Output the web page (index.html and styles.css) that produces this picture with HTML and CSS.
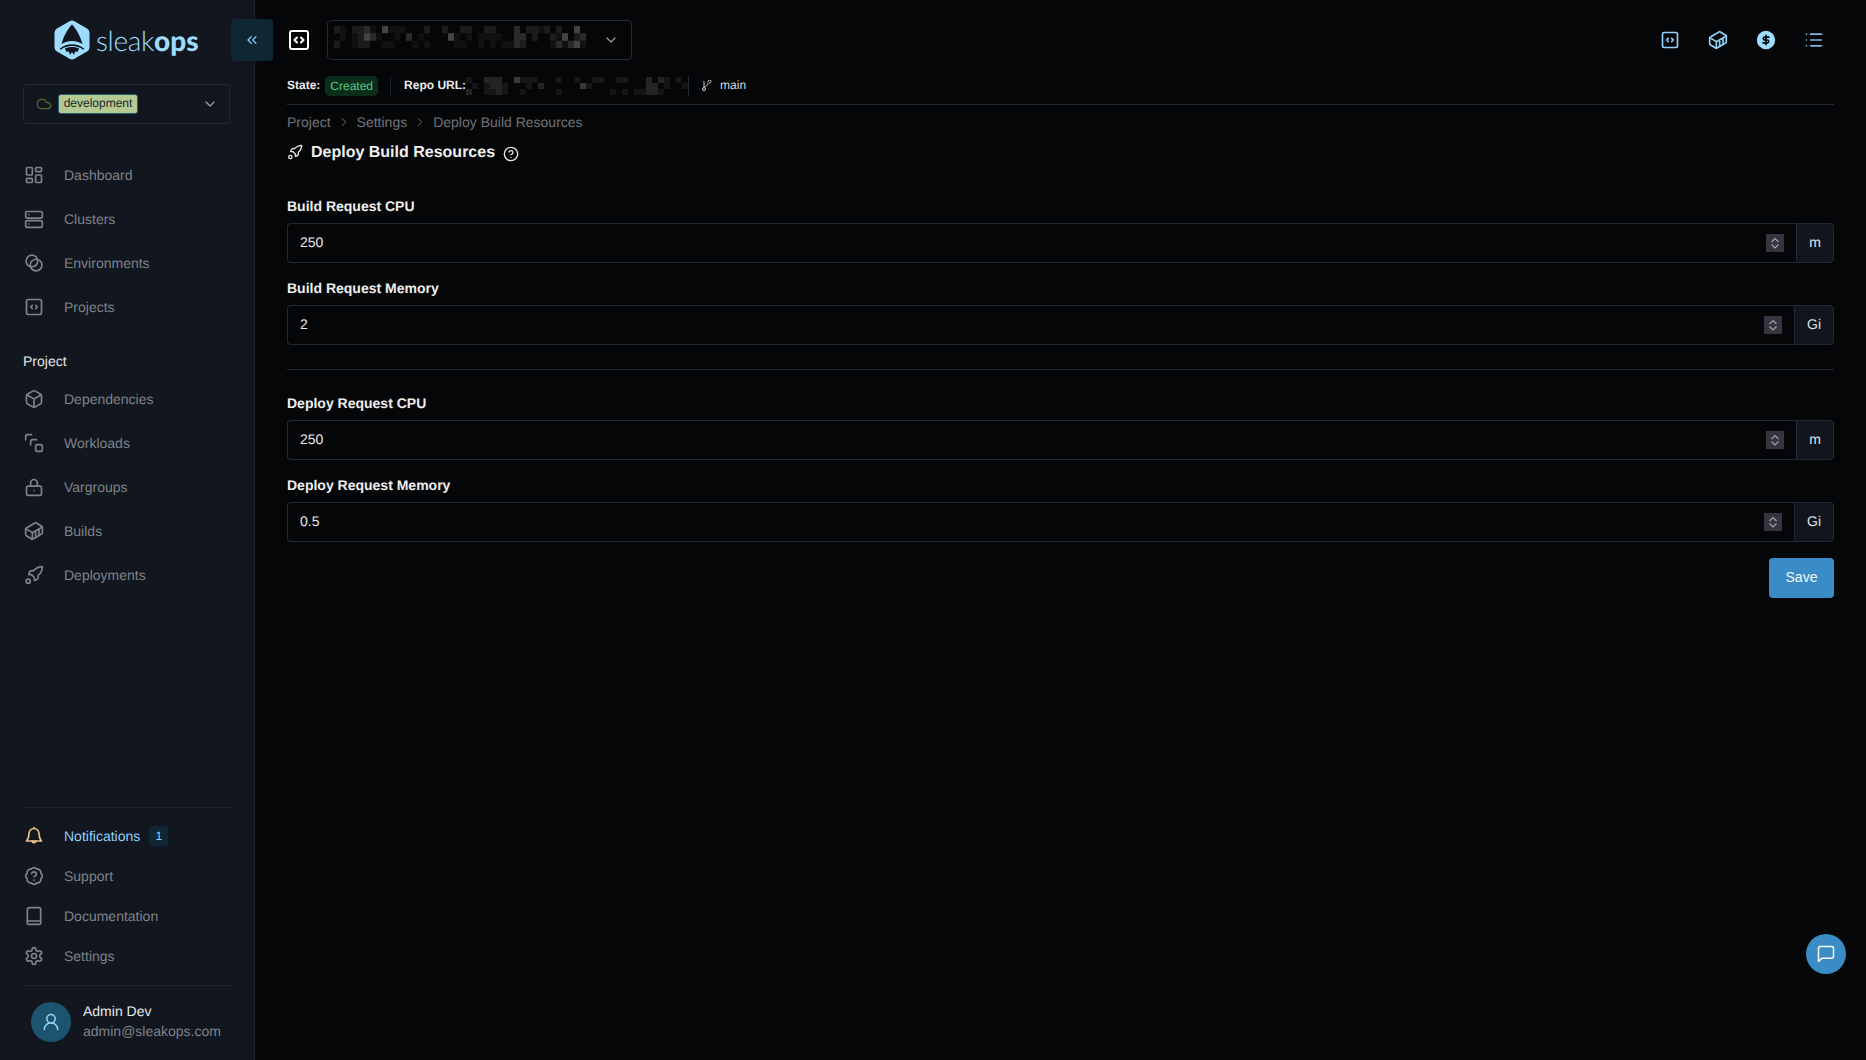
FILE: index.html
```html
<!DOCTYPE html>
<html lang="en">
<head>
<meta charset="utf-8">
<title>Deploy Build Resources</title>
<link rel="stylesheet" href="styles.css">
</head>
<body>
<div class="app">
  <aside class="sidebar">
    <div class="logo">
      <svg class="logo-mark" viewBox="0 0 36 40">
        <path class="logo-hex" d="M15.500 1.200a5 5 0 0 1 5 0l12.500 7.200a5 5 0 0 1 2.500 4.300v14.600a5 5 0 0 1-2.500 4.300l-12.500 7.200a5 5 0 0 1-5 0L3 31.600a5 5 0 0 1-2.500-4.300V12.700A5 5 0 0 1 3 8.400z"/>
        <path class="logo-cut" d="M18 4.500c4.500 4.500 8.500 12 10.500 19.500-6.500-4-14.500-4-21 0C9.500 16.500 13.500 9 18 4.500z"/>
        <path class="logo-cut" d="M5.800 28.500c7-5.800 17.400-5.800 24.400 0l-.9 1.200c-6.600-5-16-5-22.600 0z"/>
        <path class="logo-cut" d="M11 28.500c4-2 10-2 14 0l-1.500 3.500-2-.8-1.500 3.500-2-2.500-2 2.500-1.500-3.500-2 .8z"/>
      </svg>
      <span class="logo-text">sleak<b>ops</b></span>
    </div>
    <div class="env-select">
      <svg class="env-cloud" viewBox="0 0 24 24"><path d="M17.500 19H9a7 7 0 1 1 6.710-9h1.790a4.500 4.500 0 1 1 0 9z"/></svg>
      <span class="env-tag">development</span>
      <svg class="chev" viewBox="0 0 24 24"><path d="m6 9 6 6 6-6"/></svg>
    </div>
    <nav class="nav nav-main">
      <a class="nav-row"><svg class="ico" viewBox="0 0 24 24"><rect x="3" y="3" width="7" height="9" rx="1"/><rect x="14" y="3" width="7" height="5" rx="1"/><rect x="14" y="12" width="7" height="9" rx="1"/><rect x="3" y="16" width="7" height="5" rx="1"/></svg>Dashboard</a>
      <a class="nav-row"><svg class="ico" viewBox="0 0 24 24"><rect x="2" y="3" width="20" height="8" rx="2"/><rect x="2" y="14" width="20" height="8" rx="2"/><path d="M6 7h.01M6 18h.01"/></svg>Clusters</a>
      <a class="nav-row"><svg class="ico" viewBox="0 0 24 24"><circle cx="9.500" cy="9.500" r="7"/><circle cx="14.500" cy="14.500" r="7"/></svg>Environments</a>
      <a class="nav-row"><svg class="ico" viewBox="0 0 24 24"><rect x="3" y="3" width="18" height="18" rx="2"/><path d="m10 10-2 2 2 2M14 14l2-2-2-2"/></svg>Projects</a>
    </nav>
    <div class="nav-heading">Project</div>
    <nav class="nav">
      <a class="nav-row"><svg class="ico" viewBox="0 0 24 24"><path d="M21 8a2 2 0 0 0-1-1.730l-7-4a2 2 0 0 0-2 0l-7 4A2 2 0 0 0 3 8v8a2 2 0 0 0 1 1.730l7 4a2 2 0 0 0 2 0l7-4A2 2 0 0 0 21 16Z"/><path d="m3.300 7 8.700 5 8.700-5M12 22V12"/></svg>Dependencies</a>
      <a class="nav-row"><svg class="ico" viewBox="0 0 24 24"><path d="M2 8V4.500A2.500 2.500 0 0 1 4.500 2H9"/><path d="M8 14v-3.500A2.500 2.500 0 0 1 10.500 8H15"/><rect x="14" y="14" width="8" height="8" rx="2"/></svg>Workloads</a>
      <a class="nav-row"><svg class="ico" viewBox="0 0 24 24"><rect x="3" y="11" width="18" height="11" rx="2"/><path d="M8 11V7a4 4 0 0 1 8 0v4M12 16.500h.01"/></svg>Vargroups</a>
      <a class="nav-row"><svg class="ico" viewBox="0 0 24 24"><path d="M22 7.700c0-.6-.4-1.200-.8-1.500l-6.300-3.900a1.720 1.720 0 0 0-1.700 0l-10.300 6c-.5.2-.9.8-.9 1.400v6.600c0 .5.4 1.200.8 1.500l6.300 3.900a1.720 1.720 0 0 0 1.700 0l10.300-6c.5-.3.9-1 .9-1.500Z"/><path d="M10 21.900V14L2.100 9.100M10 14l11.900-6.900M14 19.800v-8.100M18 17.500V9.400"/></svg>Builds</a>
      <a class="nav-row"><svg class="ico" viewBox="0 0 24 24"><path d="M9 11.500H5.500s.6-3 2-4c1.600-1.100 4-.5 4-.5 2.500-3 6-5 10.500-5 0 4.500-2 8-5 10.500 0 0 .6 2.400-.5 4-1 1.400-4 2-4 2V15z"/><circle cx="5" cy="19.500" r="2.500"/></svg>Deployments</a>
    </nav>
    <div class="side-foot">
      <nav class="nav nav-foot">
        <a class="nav-row nav-row-tight nav-active"><svg class="ico ico-bell" viewBox="0 0 24 24"><path d="M6 9a6 6 0 0 1 12 0c0 6 2.500 8 3 9H3c.5-1 3-3 3-9"/><path d="M12 3V2M10 18a2 2 0 0 0 4 0"/></svg>Notifications<span class="count">1</span></a>
        <a class="nav-row nav-row-tight"><svg class="ico" viewBox="0 0 24 24"><path d="M3.850 8.620a4 4 0 0 1 4.780-4.770 4 4 0 0 1 6.740 0 4 4 0 0 1 4.780 4.780 4 4 0 0 1 0 6.740 4 4 0 0 1-4.770 4.780 4 4 0 0 1-6.750 0 4 4 0 0 1-4.780-4.770 4 4 0 0 1 0-6.760Z"/><path d="M9.090 9a3 3 0 0 1 5.830 1c0 2-3 3-3 3M12 17h.01"/></svg>Support</a>
        <a class="nav-row nav-row-tight"><svg class="ico" viewBox="0 0 24 24"><path d="M4 5a3 3 0 0 1 3-3h11a2 2 0 0 1 2 2v16a2 2 0 0 1-2 2H6a2 2 0 0 1-2-2z"/><path d="M4 18h16"/></svg>Documentation</a>
        <a class="nav-row nav-row-tight"><svg class="ico" viewBox="0 0 24 24"><path d="M12.220 2h-.44a2 2 0 0 0-2 2v.18a2 2 0 0 1-1 1.730l-.43.25a2 2 0 0 1-2 0l-.15-.08a2 2 0 0 0-2.730.73l-.22.38a2 2 0 0 0 .73 2.730l.15.1a2 2 0 0 1 1 1.720v.51a2 2 0 0 1-1 1.740l-.15.09a2 2 0 0 0-.73 2.730l.22.38a2 2 0 0 0 2.730.73l.15-.08a2 2 0 0 1 2 0l.43.25a2 2 0 0 1 1 1.730V20a2 2 0 0 0 2 2h.44a2 2 0 0 0 2-2v-.18a2 2 0 0 1 1-1.730l.43-.25a2 2 0 0 1 2 0l.15.08a2 2 0 0 0 2.730-.73l.22-.39a2 2 0 0 0-.73-2.730l-.15-.08a2 2 0 0 1-1-1.740v-.5a2 2 0 0 1 1-1.740l.15-.09a2 2 0 0 0 .73-2.730l-.22-.38a2 2 0 0 0-2.730-.73l-.15.08a2 2 0 0 1-2 0l-.43-.25a2 2 0 0 1-1-1.730V4a2 2 0 0 0-2-2z"/><circle cx="12" cy="12" r="3"/></svg>Settings</a>
      </nav>
      <div class="user">
        <span class="avatar"><svg viewBox="0 0 24 24"><circle cx="12" cy="8" r="5"/><path d="M20 21a8 8 0 0 0-16 0"/></svg></span>
        <span class="user-text"><span class="user-name">Admin Dev</span><span class="user-mail">admin@sleakops.com</span></span>
      </div>
    </div>
  </aside>

  <main class="main">
    <header class="topbar">
      <button class="collapse"><svg viewBox="0 0 24 24"><path d="m11 17-5-5 5-5M18 17l-5-5 5-5"/></svg></button>
      <svg class="top-code" viewBox="0 0 20 20"><rect x="1" y="1" width="18" height="18" rx="2"/><path d="M8 7.500 5.500 10 8 12.500M12 12.500l2.500-2.500L12 7.500"/></svg>
      <div class="project-select">
        <svg class="mosaic mosaic-a" viewBox="0 0 42 3" preserveAspectRatio="none">
          <path class="m1" d="M1 0h1v1H1zM9 0h3v1H9zM34 0h1v1h-1zM6 0h1v1H6zM1 1h1v1H1zM3 1h1v1H3zM7 1h1v1H7zM10 1h1v1h-1zM14 1h1v1h-1zM20 1h1v1h-1zM22 1h1v1h-1zM24 1h4v1h-4zM37 1h1v1h-1zM3 2h1v1H3zM8 2h2v1H8zM13 2h1v1h-1zM15 2h1v1h-1zM20 2h2v1h-2zM24 2h1v1h-1zM26 2h1v1h-1zM28 2h2v1h-2zM36 2h1v1h-1zM38 2h1v1h-1zM41 2h1v1h-1z"/>
          <path class="m2" d="M0 0h1v1H0zM3 0h2v1H3zM15 0h1v1h-1zM18 0h1v1h-1zM21 0h2v1h-2zM25 0h2v1h-2zM32 0h2v1h-2zM35 0h1v1h-1zM37 0h1v1h-1zM4 1h1v1H4zM33 1h1v1h-1zM36 1h1v1h-1zM40 1h1v1h-1zM0 2h1v1H0zM4 2h2v1H4zM31 2h1v1h-1z"/>
          <path class="m3" d="M5 0h1v1H5zM30 0h1v1h-1zM6 1h1v1H6zM12 1h1v1h-1zM30 1h2v1h-2zM41 1h1v1h-1zM30 2h1v1h-1zM37 2h1v1h-1zM39 2h1v1h-1z"/>
          <path class="m4" d="M8 0h1v1H8zM40 0h1v1h-1zM5 1h1v1H5zM19 1h1v1h-1zM38 1h1v1h-1zM40 2h1v1h-1z"/>
        </svg>
        <svg class="chev chev-top" viewBox="0 0 24 24"><path d="m6 9 6 6 6-6"/></svg>
      </div>
      <div class="top-actions">
        <button class="top-btn"><svg class="ico" viewBox="0 0 24 24"><rect x="3" y="3" width="18" height="18" rx="2"/><path d="m10 10-2 2 2 2M14 14l2-2-2-2"/></svg></button>
        <button class="top-btn"><svg class="ico" viewBox="0 0 24 24"><path d="M22 7.700c0-.6-.4-1.200-.8-1.500l-6.300-3.900a1.720 1.720 0 0 0-1.700 0l-10.300 6c-.5.2-.9.8-.9 1.400v6.600c0 .5.4 1.200.8 1.500l6.300 3.900a1.720 1.720 0 0 0 1.700 0l10.300-6c.5-.3.9-1 .9-1.500Z"/><path d="M10 21.900V14L2.100 9.100M10 14l11.900-6.900M14 19.800v-8.100M18 17.500V9.400"/></svg></button>
        <button class="top-btn"><svg class="ico ico-dollar" viewBox="0 0 24 24"><circle class="dollar-disc" cx="12" cy="12" r="10"/><path class="dollar-s" d="M15.500 8.500h-5a1.750 1.750 0 0 0 0 3.500h3a1.750 1.750 0 0 1 0 3.500h-5M12 6.500v11"/></svg></button>
        <button class="top-btn"><svg class="ico ico-list" viewBox="0 0 24 24"><path class="list-bars" d="M8 5h13M8 12h13M8 19h13"/><path d="M3 5h.01M3 12h.01M3 19h.01"/></svg></button>
      </div>
    </header>

    <div class="statebar">
      <b class="state-key">State:</b>
      <span class="state-badge">Created</span>
      <span class="vsep"></span>
      <b class="state-key">Repo URL:</b>
      <svg class="mosaic mosaic-b" viewBox="0 0 37 3" preserveAspectRatio="none">
        <path class="m1" d="M0 0h1v1H0zM9 0h3v1H9zM15 0h1v1h-1zM18 0h1v1h-1zM21 0h2v1h-2zM25 0h2v1h-2zM33 0h1v1h-1zM35 0h1v1h-1zM1 1h1v1H1zM3 1h1v1H3zM6 1h1v1H6zM10 1h1v1h-1zM33 1h1v1h-1zM36 1h1v1h-1zM20 1h1v1h-1zM3 2h2v1H3zM6 2h1v1H6zM9 2h1v1H9zM15 2h1v1h-1zM24 2h1v1h-1zM26 2h1v1h-1zM28 2h2v1h-2zM32 2h1v1h-1z"/>
        <path class="m2" d="M3 0h3v1H3zM30 0h1v1h-1zM32 0h1v1h-1zM4 1h2v1H4zM12 1h1v1h-1zM30 1h2v1h-2zM0 2h1v1H0zM5 2h1v1H5zM30 2h2v1h-2z"/>
        <path class="m3" d="M8 0h1v1H8zM19 1h1v1h-1z"/>
      </svg>
      <span class="vsep vsep-flush"></span>
      <svg class="branch" viewBox="0 0 24 24"><path d="M8 3v10M8 21a3 3 0 1 0 0-6 3 3 0 0 0 0 6zM19 6a3 3 0 1 0-3-3M16 6c0 6-5 6-8 9"/></svg>
      <span class="branch-name">main</span>
    </div>

    <div class="crumbs">
      <span>Project</span>
      <svg viewBox="0 0 24 24"><path d="m9 6 6 6-6 6"/></svg>
      <span>Settings</span>
      <svg viewBox="0 0 24 24"><path d="m9 6 6 6-6 6"/></svg>
      <span>Deploy Build Resources</span>
    </div>

    <h1 class="title">
      <svg class="title-rocket" viewBox="0 0 24 24"><path d="M9 11.500H5.500s.6-3 2-4c1.600-1.100 4-.5 4-.5 2.500-3 6-5 10.500-5 0 4.500-2 8-5 10.500 0 0 .6 2.400-.5 4-1 1.400-4 2-4 2V15z"/><circle cx="5" cy="19.500" r="2.500"/></svg>
      <span class="title-text">Deploy Build Resources</span>
      <svg class="title-help" viewBox="0 0 24 24"><circle cx="12" cy="12" r="10"/><path d="M9.090 9a3 3 0 0 1 5.830 1c0 2-3 3-3 3M12 17h.01"/></svg>
    </h1>

    <form class="form">
      <label class="field">
        <span class="field-label">Build Request CPU</span>
        <span class="input-group"><span class="input-box"><input class="input" type="number" value="250"><span class="spin"><svg viewBox="0 0 18 18"><path d="M5.500 8 9 4.500 12.500 8M5.500 10.500 9 14l3.500-3.500"/></svg></span></span><span class="addon">m</span></span>
      </label>
      <label class="field">
        <span class="field-label">Build Request Memory</span>
        <span class="input-group"><span class="input-box"><input class="input" type="number" value="2"><span class="spin"><svg viewBox="0 0 18 18"><path d="M5.500 8 9 4.500 12.500 8M5.500 10.500 9 14l3.500-3.500"/></svg></span></span><span class="addon">Gi</span></span>
      </label>
      <hr class="rule">
      <label class="field">
        <span class="field-label">Deploy Request CPU</span>
        <span class="input-group"><span class="input-box"><input class="input" type="number" value="250"><span class="spin"><svg viewBox="0 0 18 18"><path d="M5.500 8 9 4.500 12.500 8M5.500 10.500 9 14l3.500-3.500"/></svg></span></span><span class="addon">m</span></span>
      </label>
      <label class="field">
        <span class="field-label">Deploy Request Memory</span>
        <span class="input-group"><span class="input-box"><input class="input" type="number" value="0.5"><span class="spin"><svg viewBox="0 0 18 18"><path d="M5.500 8 9 4.500 12.500 8M5.500 10.500 9 14l3.500-3.500"/></svg></span></span><span class="addon">Gi</span></span>
      </label>
      <div class="form-actions"><button class="save" type="button">Save</button></div>
    </form>
  </main>

  <button class="chat"><svg viewBox="0 0 24 24"><path d="M21 15a2 2 0 0 1-2 2H7l-4 4V5a2 2 0 0 1 2-2h14a2 2 0 0 1 2 2z"/></svg></button>
</div>
</body>
</html>
```
FILE: styles.css
```css
* { box-sizing: border-box; }
html, body { margin: 0; height: 100%; }
body {
  background: #050608;
  color: #fff;
  font-family: "Liberation Sans", Arial, sans-serif;
  font-size: 14px;
  overflow: hidden;
  color-scheme: dark;
  text-rendering: geometricPrecision;
}
svg { display: block; fill: none; stroke: currentColor; stroke-width: 2; stroke-linecap: round; stroke-linejoin: round; flex: none; }
button { font: inherit; border: 0; padding: 0; background: none; color: inherit; }

.app { position: relative; display: flex; height: 1060px; }

/* Sidebar */
.sidebar {
  width: 255px;
  flex: none;
  display: flex;
  flex-direction: column;
  padding: 0 24px 0 23px;
  background: #11161f;
  border-right: 1px solid #1e2430;
}
.logo { height: 80px; margin-bottom: 4px; display: flex; align-items: center; padding-left: 31px; gap: 6px; }
.logo-mark { width: 36px; height: 40px; stroke: none; }
.logo-hex { fill: #9edcff; }
.logo-cut { fill: #11161f; }
.logo-text { font-family: Lato, sans-serif; font-size: 28px; font-weight: 300; color: #9edcff; letter-spacing: -.3px; }
.logo-text b { font-weight: 900; letter-spacing: 0; }

.env-select {
  height: 40px;
  display: flex;
  align-items: center;
  padding: 0 11px 0 12px;
  border: 1px solid #232a36;
  border-radius: 4px;
}
.env-cloud { width: 16px; height: 16px; color: #5a6b32; margin-right: 6px; stroke-width: 1.800; }
.env-tag {
  height: 20px;
  width: 80px;
  line-height: 17px;
  text-align: center;
  font-size: 12px;
  color: #20262a;
  background: #b5c993;
  border: 1px solid #2b5f70;
  border-radius: 3px;
}
.chev { width: 16px; height: 16px; color: #9a9ea5; margin-left: auto; stroke-width: 1.800; }

.nav { display: flex; flex-direction: column; }
.nav-main { margin-top: 29px; }
.nav-row {
  height: 44px;
  display: flex;
  align-items: center;
  gap: 21px;
  color: #7f8389;
  font-size: 14px;
}
.nav-row-tight { height: 40px; }
.ico { width: 20px; height: 20px; margin-left: 1px; margin-right: -1px; stroke-width: 2; }
.nav-heading { margin-top: 22px; margin-bottom: 6px; line-height: 20px; color: #e4e5e7; }

.side-foot { margin-top: auto; }
.nav-foot { padding: 8px 0 9px; border-top: 1px solid #1f2530; border-bottom: 1px solid #1f2530; }
.nav-row.nav-active { color: #8fd2f8; }
.ico-bell { color: #efc18c; }
.count {
  width: 19px;
  height: 20px;
  margin-left: -12px;
  border-radius: 4px;
  background: #0f2733;
  color: #8fd2f8;
  font-size: 12px;
  line-height: 20px;
  text-align: center;
}
.user { display: flex; align-items: center; gap: 12px; padding: 16px 0 18px 8px; }
.avatar {
  width: 40px;
  height: 40px;
  border-radius: 50%;
  background: #1c5470;
  color: #93d6fb;
  display: flex;
  align-items: center;
  justify-content: center;
}
.avatar svg { width: 20px; height: 20px; stroke-width: 1.800; }
.user-text { display: flex; flex-direction: column; margin-top: -2px; line-height: 20px; white-space: nowrap; }
.user-name { color: #e6e7e9; }
.user-mail { color: #7f8389; }

/* Main */
.main { flex: 1; min-width: 0; padding: 20px 32px 0; }
.topbar { display: flex; align-items: center; height: 40px; }
.collapse {
  width: 42px;
  height: 42px;
  margin-left: -56px;
  flex: none;
  border-radius: 4px;
  background: #0f2733;
  color: #8fd2f8;
  display: flex;
  align-items: center;
  justify-content: center;
}
.collapse svg { width: 16px; height: 16px; stroke-width: 1.800; }
.top-code { width: 20px; height: 20px; margin-left: 16px; color: #fff; }
.project-select {
  width: 305px;
  height: 40px;
  margin-left: 18px;
  display: flex;
  align-items: center;
  padding: 0 12px 0 6px;
  border: 1px solid #232a36;
  border-radius: 4px;
}
.mosaic { stroke: none; }
.mosaic-a { width: 252px; height: 22px; margin-top: -6px; }
.mosaic-b { width: 222px; height: 18px; }
.m1 { fill: #101112; }
.m2 { fill: #1b1c1d; }
.m3 { fill: #2a2b2c; }
.m4 { fill: #434445; }
.mosaic-b .m1 { fill: #141516; }
.mosaic-b .m2 { fill: #232425; }
.mosaic-b .m3 { fill: #383939; }
.chev-top { margin-left: auto; }
.top-actions { margin-left: auto; display: flex; gap: 8px; color: #8fd2f8; }
.top-btn { width: 40px; height: 40px; display: flex; align-items: center; justify-content: center; }
.top-btn .ico { margin: 0; }
.dollar-disc { fill: #9edcff; stroke: #9edcff; }
.dollar-s { stroke: #050608; }
.ico-list { color: #7fb8da; }

.statebar {
  display: flex;
  align-items: center;
  margin-top: 16px;
  padding-bottom: 8px;
  height: 29px;
  border-bottom: 1px solid #232a36;
  font-size: 12px;
  line-height: 18px;
}
.state-key { margin-bottom: 2px; color: #ececec; font-weight: 700; white-space: nowrap; }
.state-badge {
  height: 20px;
  line-height: 20px;
  padding: 0 5px;
  margin-left: 5px;
  border-radius: 5px;
  background: #0b2e1c;
  color: #54c984;
}
.vsep { width: 1px; height: 20px; background: #1a1f28; margin: 0 13px 0 12px; }
.vsep.vsep-flush { margin: 0 11px 0 0; background: #232a36; }
.branch { width: 12px; height: 12px; color: #d0d2d5; }
.branch-name { margin: 0 0 2px 8px; color: #dadbdd; }

.crumbs { display: flex; align-items: center; height: 20px; margin-top: 7px; color: #707479; gap: 6px; }
.crumbs svg { width: 14px; height: 14px; stroke-width: 1.600; }

.title { display: flex; align-items: center; height: 24px; margin: 8px 0 0; font-size: 16px; font-weight: 700; color: #f0f0f0; }
.title-text { margin-top: 2px; }
.title-rocket { width: 16px; height: 16px; margin-right: 8px; color: #e6e6e6; }
.title-help { width: 16px; height: 16px; margin: 3px 0 0 8px; color: #e6e6e6; }

.form { margin-top: 32px; display: flex; flex-direction: column; gap: 15px; }
.field { display: block; }
.field-label { display: block; height: 20px; line-height: 20px; margin-bottom: 7px; font-weight: 700; color: #eeeeee; }
.input-group { display: flex; height: 40px; }
.input-box {
  flex: 1;
  min-width: 0;
  display: flex;
  align-items: center;
  padding-right: 12px;
  background: #050608;
  border: 1px solid #232a36;
  border-right: 0;
  border-radius: 4px 0 0 4px;
}
.input {
  flex: 1;
  min-width: 0;
  height: 38px;
  padding: 0 12px 2px;
  background: transparent;
  color: #e8e8e8;
  font: 14px "Liberation Sans", Arial, sans-serif;
  text-rendering: geometricPrecision;
  border: 0;
  outline: none;
  appearance: textfield;
}
.input::-webkit-inner-spin-button { display: none; }
.spin { width: 18px; height: 18px; background: #37343f; color: #a2a2a8; }
.spin svg { width: 18px; height: 18px; stroke-width: 1.200; stroke-linecap: butt; stroke-linejoin: miter; }
.addon {
  padding: 0 12px 2px;
  display: flex;
  align-items: center;
  background: #10151e;
  color: #e4e5e7;
  border: 1px solid #232a36;
  border-radius: 0 4px 4px 0;
}
.rule { width: 100%; margin: 9px 0 8px; border: 0; border-top: 1px solid #232a36; }
.form-actions { display: flex; justify-content: flex-end; margin-top: 1px; }
.save { width: 65px; height: 40px; padding-bottom: 2px; border-radius: 4px; background: #3a8cc4; color: #f3f8fb; }

.chat {
  position: absolute;
  left: 1806px;
  top: 934px;
  width: 40px;
  height: 40px;
  border-radius: 50%;
  background: #3a8cc4;
  color: #fff;
  display: flex;
  align-items: center;
  justify-content: center;
}
.chat svg { width: 20px; height: 20px; stroke-width: 1.800; }
```
